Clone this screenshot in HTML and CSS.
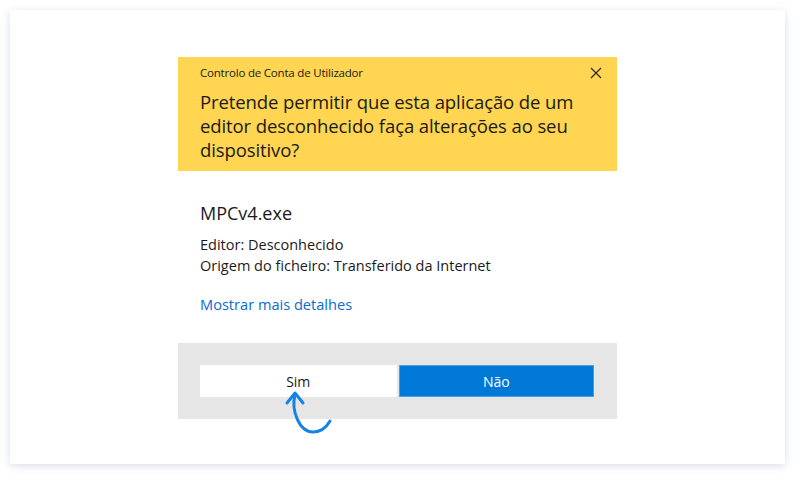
FILE: index.html
```html
<!DOCTYPE html>
<html lang="pt">
<head>
<meta charset="utf-8">
<link rel="stylesheet" href="styles.css">
</head>
<body>
<div class="card">
  <div class="dialog">
    <div class="header">
      <div class="titlebar">
        <span class="title">Controlo de Conta de Utilizador</span>
        <svg class="close" width="12" height="12" viewBox="0 0 12 12"><path d="M1 1L11 11M11 1L1 11" stroke="#222" stroke-width="1.1" fill="none"/></svg>
      </div>
      <div class="question">Pretende permitir que esta aplicação de um editor desconhecido faça alterações ao seu dispositivo?</div>
    </div>
    <div class="body">
      <div class="app">MPCv4.exe</div>
      <div class="info">Editor: Desconhecido<br>Origem do ficheiro: Transferido da Internet</div>
      <div class="link">Mostrar mais detalhes</div>
    </div>
    <div class="footer">
      <div class="btn yes">Sim</div>
      <div class="btn no">Não</div>
      <svg class="arrow" width="60" height="50" viewBox="0 0 60 50"><path d="M17 7C13 22 21 44 35 44C42 44 48 40 52 33" stroke="#1583e6" stroke-width="3" fill="none" stroke-linecap="round"/><path d="M9 15L17 5L25 15" stroke="#1583e6" stroke-width="3" fill="none" stroke-linecap="round" stroke-linejoin="round"/></svg>
    </div>
  </div>
</div>
</body>
</html>
```
FILE: styles.css
```css
html, body { margin: 0; padding: 0; background: #fff; }
body { width: 800px; height: 480px; overflow: hidden; font-family: "Open Sans", "Noto Sans", sans-serif; color: #1a1a1a; }
.card {
  margin: 10px 0 0 10px;
  width: 775px;
  height: 454px;
  background: #fff;
  box-shadow: 0 2px 8px rgba(150,160,185,0.35);
  box-sizing: border-box;
  padding: 47px 0 0 168px;
}
.dialog { width: 439px; }
.header { background: #ffd551; height: 114px; box-sizing: border-box; padding: 0 22px 0 22px; }
.titlebar { display: flex; justify-content: space-between; align-items: center; height: 29px; padding-top: 1px; }
.title { font-size: 11.5px; letter-spacing: -0.2px; }
.close { margin-right: -7px; }
.question { font-size: 18.5px; line-height: 24px; margin-top: 3px; letter-spacing: -0.1px; }
.body { padding: 30px 22px 0 22px; height: 172px; box-sizing: border-box; }
.app { font-size: 18px; line-height: 24px; }
.info { font-size: 14.5px; line-height: 21px; margin-top: 9px; }
.link { font-size: 14.6px; line-height: 21px; margin-top: 18px; color: #0a6ccf; }
.footer { position: relative; background: #e6e6e6; height: 76px; display: flex; gap: 2px; padding: 22px 23px 0 22px; box-sizing: border-box; }
.btn { width: 197px; height: 32px; display: flex; align-items: center; justify-content: center; font-size: 14px; box-sizing: border-box; }
.yes { background: #fff; }
.no { background: #0078d7; color: #fff; border: 1px solid #4a9ee6; width: 196px; }
.arrow { position: absolute; left: 100px; top: 45px; }
```
